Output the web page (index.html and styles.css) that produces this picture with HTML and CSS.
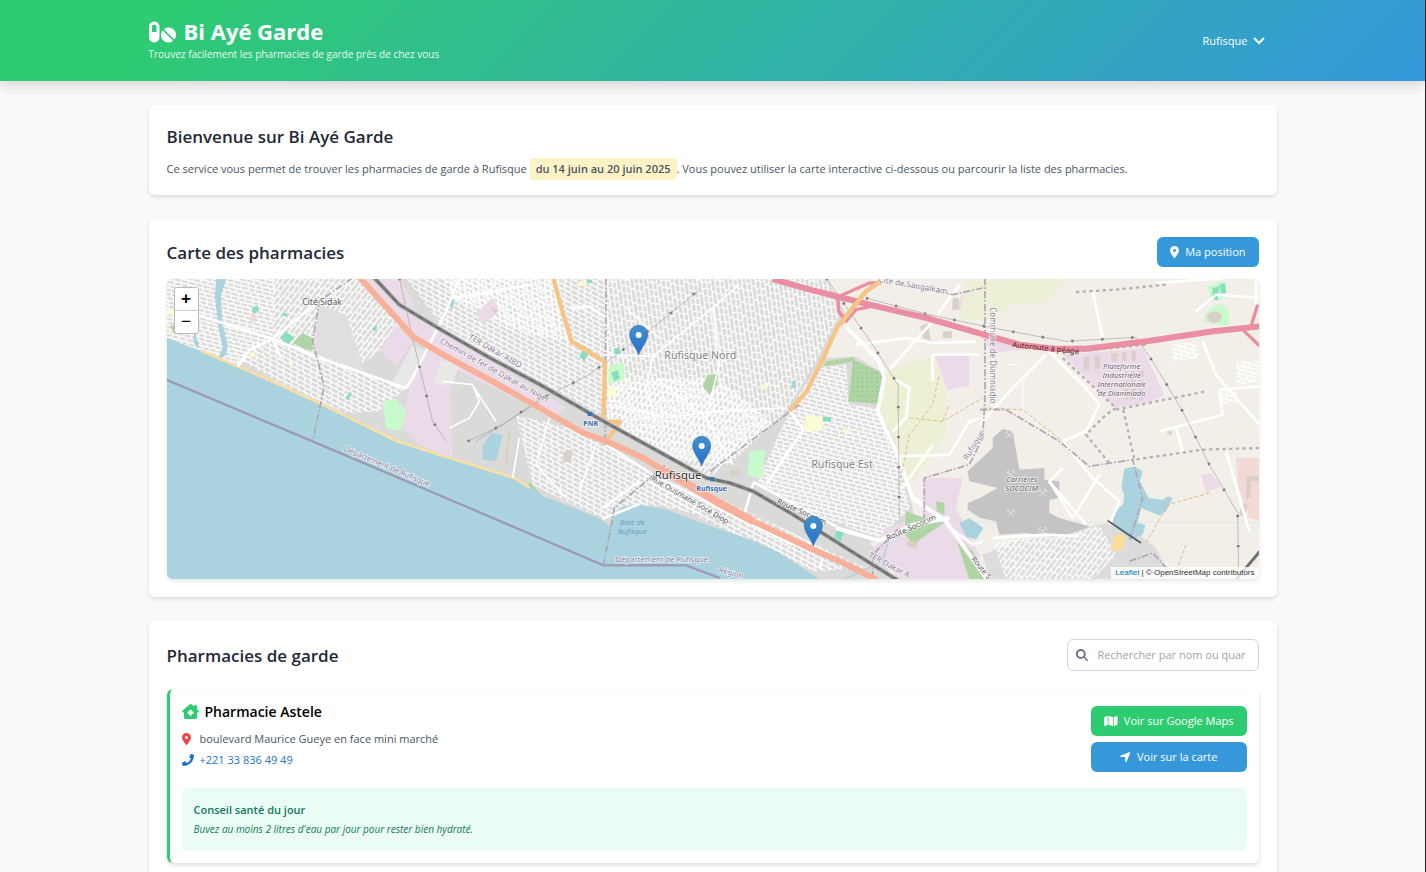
FILE: index.html
```html
<!DOCTYPE html>
<html lang="fr">
<head>
<meta charset="utf-8">
<meta name="viewport" content="width=device-width, initial-scale=1">
<title>Bi Ayé Garde</title>
<link rel="stylesheet" href="styles.css">
</head>
<body>
<header class="site-header">
  <div class="container header-row">
    <div class="brand">
      <h1 class="brand-title">
        <svg class="brand-icon" viewBox="0 0 576 512" aria-hidden="true"><path d="M112 96c-26.500 0-48 21.500-48 48V256h96V144c0-26.500-21.500-48-48-48zM0 144C0 82.100 50.100 32 112 32s112 50.100 112 112V368c0 61.900-50.100 112-112 112S0 429.900 0 368V144zM554.900 399.400c-7.100 12.300-23.700 13.100-33.800 3.100L333.500 214.900c-10-10-9.300-26.700 3.100-33.800C360 167.700 387.100 160 416 160c88.400 0 160 71.600 160 160c0 28.900-7.700 56-21.100 79.400zm-59.500 59.500C472 472.300 444.900 480 416 480c-88.400 0-160-71.600-160-160c0-28.900 7.700-56 21.100-79.400c7.100-12.300 23.700-13.100 33.800-3.100L498.500 425.100c10 10 9.300 26.700-3.100 33.800z"/></svg>
        Bi Ayé Garde
      </h1>
      <p class="brand-tagline">Trouvez facilement les pharmacies de garde près de chez vous</p>
    </div>
    <label class="city">
      <select class="city-select" aria-label="Ville"><option>Rufisque</option></select>
      <svg class="city-chevron" viewBox="0 0 12 8" aria-hidden="true"><path d="M1 1l5 5 5-5"/></svg>
    </label>
  </div>
</header>

<main class="container page">
  <section class="card card-intro">
    <h2 class="card-title">Bienvenue sur Bi Ayé Garde</h2>
    <p class="intro">Ce service vous permet de trouver les pharmacies de garde à Rufisque <strong class="period">du 14 juin au 20 juin 2025</strong>. Vous pouvez utiliser la carte interactive ci-dessous ou parcourir la liste des pharmacies.</p>
  </section>

  <section class="card">
    <div class="card-head">
      <h2 class="card-title">Carte des pharmacies</h2>
      <button class="btn btn-blue" type="button">
        <svg class="icon" viewBox="0 0 384 512" aria-hidden="true"><path d="M215.700 499.200C267 435 384 279.400 384 192C384 86 298 0 192 0S0 86 0 192c0 87.400 117 243 168.300 307.200c12.300 15.300 35.100 15.300 47.400 0zM192 128a64 64 0 1 1 0 128 64 64 0 1 1 0-128z"/></svg>
        Ma position
      </button>
    </div>
    <div class="map">
      <svg class="map-tiles" viewBox="3 3 3276 900" preserveAspectRatio="xMidYMid slice" role="img" aria-label="Carte de Rufisque">
        <defs>
          <pattern id="streets-a" width="44" height="36" patternUnits="userSpaceOnUse" patternTransform="rotate(14)"><path class="lane" d="M0 3H44M0 15H44M0 27H44M6 3V15M28 3V15M16 15V27M38 15V27M4 27V39M24 27V39"/></pattern>
          <pattern id="streets-b" width="48" height="40" patternUnits="userSpaceOnUse" patternTransform="rotate(-52)"><path class="lane" d="M0 3H48M0 17H48M0 30H48M8 3V17M34 3V17M20 17V30M2 30V43M30 30V43"/></pattern>
          <pattern id="streets-c" width="46" height="39" patternUnits="userSpaceOnUse" patternTransform="rotate(28)"><path class="lane" d="M0 3H46M0 16H46M0 29H46M10 3V16M32 3V16M20 16V29M42 16V29M5 29V42M26 29V42"/></pattern>
          <pattern id="streets-d" width="40" height="42" patternUnits="userSpaceOnUse" patternTransform="rotate(-8)"><path class="lane" d="M3 0V42M16 0V42M29 0V42M3 8H16M3 30H16M16 18H29M29 4H43M29 26H43"/></pattern>
          <pattern id="trees" width="14" height="14" patternUnits="userSpaceOnUse"><rect width="14" height="14" fill="#aed5a3"/><circle cx="4" cy="4" r="2" fill="#80b878"/></pattern>
          <linearGradient id="pin-fill" x1="0" y1="0" x2="0" y2="1"><stop offset="0" stop-color="#4191cd"/><stop offset="1" stop-color="#2571cb"/></linearGradient>
          <g id="pin">
            <path d="M0 0C-6-22-27-38-27-62A27 27 0 0 1 27-62C27-38 6-22 0 0z" fill="url(#pin-fill)" stroke="#2e6fb0" stroke-width="2"/>
            <circle cy="-60" r="9" fill="#fff"/>
          </g>
          <g id="pick" fill="none" stroke="#e9e7e5" stroke-width="3"><path d="M-9-9L10 9M9-9L-10 9M-13-3Q-13-11-4-12M4-12Q13-11 13-3"/></g>
        </defs>

        <!-- land and neighbourhoods -->
        <rect width="3300" height="910" fill="#f2efe9"/>
        <path d="M0 0H1980L2040 110L1972 240L2070 236L2150 285L2135 380L2190 500L2232 660L2250 740L2180 800L2110 790L2190 910H0z" fill="#dadad9"/>
        <path d="M0 0H330L320 180L220 265L0 180z" fill="url(#streets-a)"/>
        <path d="M320 0H560L720 60L700 150L640 220L560 280L440 240L320 180z" fill="url(#streets-b)"/>
        <path d="M460 80L540 110L600 290L440 240z" fill="#e1dfdd"/>
        <path d="M230 250L320 185L470 235L720 330L640 400L540 405L330 310z" fill="url(#streets-c)"/>
        <path d="M720 0H1330V430L840 160z" fill="url(#streets-c)"/>
        <path d="M830 0H1180L1210 190L1080 170L860 60z" fill="url(#streets-d)"/>
        <path d="M1320 0H1980L2020 110L1950 250L1860 400L1690 560L1500 540L1320 440z" fill="url(#streets-d)"/>
        <path d="M1330 300H1660L1820 440L1630 600L1500 540L1330 440z" fill="url(#streets-b)"/>
        <path d="M1950 270L2040 260L2050 380L2130 390L2190 520L2232 690L2140 780L1970 720L1770 620L1870 400z" fill="url(#streets-a)"/>
        <path d="M1050 410L1250 460L1620 690L1600 710L1460 680L1300 720L1100 620z" fill="url(#streets-c)"/>
        <path d="M1400 580L1640 650L2100 870L1940 880L1600 720z" fill="url(#streets-c)"/>

        <!-- industrial areas -->
        <path d="M590 0H700L760 110L1200 390L1160 415L840 260L760 190z" fill="#ebdbe8"/>
        <path d="M690 140L740 190L690 265L640 215zM770 215L850 240L860 540L760 500L700 440L730 330z" fill="#ebdbe8"/>
        <path d="M930 105L980 60L1000 100L950 140z" fill="#ebdbe8"/>
        <path d="M740 200L775 215L730 330L680 310zM825 245L880 260L860 320L800 320z" fill="#e8e8e8"/>
        <path d="M2305 230H2410V325L2345 335zM2365 90L2400 35L2440 50L2420 110zM2270 600L2390 600L2370 690L2440 830V905H2200L2120 820L2160 750L2270 715z" fill="#ebdbe8"/>
        <path d="M2690 230L2930 210L2995 350L2960 370L2850 390zM3105 590L3135 585L3165 625L3120 645zM2442 170L2650 205L2480 225z" fill="#ebdbe8"/>

        <!-- farmland and greens -->
        <path d="M2160 280L2300 230L2342 330L2340 470L2250 600L2220 620L2200 510L2140 400z" fill="#eef0d5"/>
        <path d="M2400 10L2700 3L2640 75L2540 80L2460 130L2380 120z" fill="#eef0d5"/>
        <path d="M2062 245L2150 285L2135 378L2046 370z" fill="url(#trees)"/>
        <path d="M1980 250L2065 237V250L1975 265zM2220 700L2290 725L2340 730L2240 800L2215 765zM2370 780L2420 820L2460 905H2410zM2310 670L2335 675V710L2312 700z" fill="#aed5a3"/>
        <path d="M380 195L410 165L440 180V220L410 210zM1610 325L1625 290H1655V320L1630 350zM1090 610L1125 650L1105 650L1085 630zM10 145L30 140V170z" fill="#aed5a3"/>
        <path d="M650 370L690 362L722 400L705 460L660 450zM1330 262L1375 255V305L1325 318zM1750 520L1798 516L1790 600L1745 595zM3110 130Q3130 75 3170 80Q3200 95 3185 145zM3125 25L3175 10L3180 60L3135 70z" fill="#c8facc"/>
        <path d="M342 180L360 160L385 180L365 200zM345 108L365 106L360 118zM258 90L275 82L278 100L262 108zM618 150L633 143L632 155L622 160zM538 360L555 340L557 350L545 367zM1240 235L1255 205L1275 215L1255 250zM1345 210H1363L1360 232H1345zM1335 285L1355 275L1362 300L1345 310zM1970 417H1995V430H1970zM2010 760L2035 755L2025 790L2005 780zM3140 30L3160 25L3155 68L3138 60zM3160 20L3178 15L3180 45L3165 48zM1265 5H1278V15H1262z" fill="#88dfbc"/>
        <path d="M0 95H25V110H0zM250 225L265 222L268 238H252zM370 252H382L378 270L370 262zM1325 327H1350V358H1322zM1920 415H1970V458H1915zM2035 455H2050V468H2036zM1785 320L1812 315L1800 335zM1240 10H1260V24H1238z" fill="#fbfbd4"/>
        <path d="M255 112L272 108L270 132L252 130zM3210 540H3282V730L3250 720L3215 620z" fill="#f2d9d8"/>

        <!-- buildings and quarry -->
        <path d="M1195 520L1220 515L1215 552H1190zM975 85L995 95L985 110zM2262 145L2285 135L2295 190L2270 180zM2330 160H2358V180H2330zM2360 60H2378V95H2358zM1693 575H1720V597H1695zM2222 790H2258L2250 812L2222 805zM3230 675L3245 680L3235 718L3218 710zM3015 460H3018V470H3004V460zM3240 595H3280V610H3255V660H3240zM3130 105A18 14 0 1 1 3160 130A18 14 0 1 1 3130 105z" fill="#d9d0c9"/>
        <path d="M2752 236H2770V276H2754zM2785 232H2803V272H2787zM2835 226H2855V250H2837zM2868 222H2882V250H2870zM2896 220H2910V248H2898z" fill="#d9d0c9"/>
        <path d="M2880 280V365M2902 280V365M2926 280V365" stroke="#d9d0c9" stroke-width="14" stroke-dasharray="18 8"/>
        <path d="M2510 453L2540 460L2560 575L2635 570V605L2680 610V660L2650 665V705L2680 720L2770 745L2730 785L2580 765L2500 770L2490 730L2442 720L2405 695V675L2442 660L2495 630L2410 610L2405 580L2480 510V480z" fill="#c5c3c3"/>
        <path d="M2550 790L2700 770L2790 740L2870 730L2970 810L3020 905H2470L2450 830z" fill="#dddcdc"/>
        <path d="M2480 790L2700 775L2800 740L2850 830L2780 905H2520z" fill="url(#streets-b)"/>
        <path d="M3020 200L3090 190L3100 240L3020 250zM3160 340H3215V375H3165zM3210 250H3280V310L3210 320z" fill="url(#streets-a)"/>

        <!-- water -->
        <path d="M0 177L40 195L90 213L170 246L250 277L330 315L400 350L480 385L540 410L600 440L690 488L820 530L940 568L1045 600L1092 625L1132 655L1172 670L1302 722L1334 747L1342 710L1367 687L1412 678L1502 695L1632 745L1735 778L1832 820L1902 865L1970 910H0z" fill="#aad3df"/>
        <path d="M2875 572Q2910 560 2930 580L2922 610L2948 660L2990 665L3005 655L3020 660L3000 700L2980 712L2925 690L2915 735L2938 740L2930 770L2895 785L2840 740Q2840 700 2870 680Q2880 650 2866 630z" fill="#aad3df"/>
        <path d="M150 0H182L165 50L168 130L185 200L180 230L158 245L170 205L158 150L147 60zM85 160L98 200L95 212L82 190zM950 505L975 465L1010 470L990 550L950 545zM852 70L866 58L862 90L854 95zM2380 735L2410 720L2452 750L2430 785L2400 775zM1876 310L1890 305L1888 330L1878 330z" fill="#aad3df"/>
        <path d="M2180 760Q2160 800 2150 850L2020 910" class="stream"/>
        <path d="M105 218L170 246L330 315L480 385L690 488L820 530L1045 600L1092 630" fill="none" stroke="#fadfa4" stroke-width="8"/>
        <path d="M2845 770L2880 770L2870 815L2835 820z" fill="#fbdc98"/>
        <path d="M472 733H3282M472 733V905M1050 733V905" class="tile-edge"/>

        <!-- local roads -->
        <g class="road">
          <path d="M60 100L320 183L460 240L720 330L740 300L840 100L880 0M320 183L440 85L560 5M320 183L345 240M320 183L250 215L215 265"/>
          <path d="M860 60L960 45L1090 20M1320 500L1460 590L1640 680L1880 800M1310 690L1420 610M1420 678L1310 722M1210 90L1270 85L1320 120"/>
          <path d="M1872 400L1912 455L1800 620M1762 615L1736 705M1762 612L2010 745M1960 870L1970 840"/>
          <path d="M2040 145L2140 250L2155 300L2135 400L2190 520L2240 660L2340 730L2460 900" stroke-width="12"/>
          <path d="M2010 750L2140 788L2240 740L2350 720" stroke-width="12"/>
          <path d="M2170 275L2300 130L2380 20M2070 200L2220 180L2300 195L2430 190M2190 305L2230 330L2220 420L2180 460M2190 535L2350 530L2410 430L2450 420M2300 310L2300 230H2440"/>
          <path d="M2210 630L2300 500M2340 740L2420 800L2450 790"/>
          <path d="M2442 440L2530 340L2640 230M2640 210L2760 330L2800 380L2760 460L2690 490L2780 600L2860 670L2830 740M2690 570L2650 610L2760 740M2480 780L2640 770L2740 775"/>
          <path d="M2650 610L2720 720L2800 590M2980 460L3170 410L3160 340M3110 190L3150 290L3280 440M2970 15L3180 0M3090 100L3150 50L3282 60M3270 0V80M3030 450L3050 520M3180 520L3250 760M3160 335L3282 325M2780 40L2810 180"/>
          <path d="M1320 230L1460 235L1440 330L1470 430M1460 235L1640 90L1720 20M1470 300L1620 420L1700 560M1340 380L1500 420L1640 400L1860 390M1640 90L1660 260L1620 420M1380 90L1480 180M1060 480L1040 600M1150 420L1110 560L1200 660M1290 500L1240 640" stroke-width="5"/>
          <path d="M830 310L920 320L940 370L910 420L850 450M925 330L990 430" stroke-width="5"/>
          <path d="M2570 300V400M2520 260H2560" stroke-width="3"/>
        </g>
        <path class="track" d="M2730 42L2850 35L3000 20M2690 240L2850 390L2820 410L2760 470L2830 555M2850 395L3120 340M2872 395L2905 545L3110 515L3282 510M2690 225L2940 200"/>
        <path class="footpath" d="M2200 620L2230 470L2300 380L2320 290M2230 420L2330 430L2450 360M2330 430L2350 380M2450 390L2570 395L2690 490M2940 795L3005 680L3130 645M3060 800L3030 880M1020 560L1030 460"/>

        <!-- boundaries -->
        <path class="border" d="M0 305L440 490L840 660L1312 862H1560L1662 900"/>
        <path class="border-dash" d="M560 0L460 70L440 190L475 325L440 490M1312 862L1335 745L1345 690L1500 560M1320 0L1318 500M1632 580L1900 380M2457 0V360L2450 480L2410 560L2275 600V720M2442 395H2520L2680 490L2770 565L2900 545L2930 660L2890 790M2890 850L2960 825L3020 890M2120 900V830L2200 750M2200 20L2360 50L2450 30" />

        <!-- power lines -->
        <path class="power" d="M700 0L742 190L800 430L840 490M905 490L1010 440L1120 365L1260 295L1325 250L1460 150L1600 35M930 490L1120 370M1980 0L2120 200L2196 320L2200 720M2100 60L2280 108L2480 150L2700 190L2910 178L2960 250L3050 400L3130 560L3215 705L3218 890"/>
        <path class="power-poles" d="M700 0L742 190L800 430L840 490M905 490L1010 440L1120 365L1260 295L1325 250L1460 150L1600 35M1980 0L2120 200L2196 320L2200 720M2100 60L2280 108L2480 150L2700 190L2910 178L2960 250L3050 400L3130 560L3215 705L3218 890"/>

        <!-- main roads and railway -->
        <path class="secondary" d="M1162 0L1192 110L1217 190L1317 252L1312 430L1362 432L1322 490M2145 8L2100 40L2060 90L2015 145L1972 240L1922 340L1872 397"/>
        <path class="trunk" d="M582 0L650 75L740 175L840 235L952 295L1122 390L1252 465L1322 490L1432 540L1662 680L1762 730L1932 810L2032 855L2132 905"/>
        <path class="trunk trunk-wide" d="M1500 580L1662 676L1762 730"/>
        <path class="rail-base" d="M625 0L700 80L830 158L972 240L1122 320L1322 435L1522 545L1622 600L1692 615L1762 640L1882 710L2032 805L2200 910"/>
        <path class="rail" d="M625 0L700 80L830 158L972 240L1122 320L1322 435L1522 545L1622 600L1692 615L1762 640L1882 710L2032 805L2200 910M3282 820L3210 905"/>
        <path class="rail-gap" d="M625 0L700 80L830 158L972 240L1122 320L1322 435L1522 545L1622 600L1692 615L1762 640L1882 710L2032 805L2200 910"/>
        <path d="M2825 728L2925 795" stroke="#555" stroke-width="5"/>
        <path class="motorway" d="M1820 3L1932 35L2032 60L2132 85L2282 120L2472 175L2562 200L2662 212H2762L2942 190L3142 160L3282 145"/>
        <path class="motorway-link" d="M2020 55L2110 15L2145 15M2016 60L2018 100L2040 130L2070 95L2140 80M3230 155L3282 205M3255 145L3275 80"/>
        <path class="secondary" d="M2145 8L2100 40L2060 90L2022 140"/>
        <path d="M1265 402h14v12h-14zM1633 598h12v12h-12z" fill="#3775b5"/>

        <!-- quarry picks -->
        <use href="#pick" x="2530" y="472"/><use href="#pick" x="2534" y="590"/><use href="#pick" x="2630" y="645"/><use href="#pick" x="2534" y="706"/><use href="#pick" x="2630" y="760"/>

        <!-- labels -->
        <g class="labels">
          <text x="468" y="82" font-size="26">Cité Sidak</text>
          <text x="1603" y="242" font-size="32" class="district">Rufisque Nord</text>
          <text x="2028" y="569" font-size="32" class="district">Rufisque Est</text>
          <text x="1536" y="604" font-size="34" class="town">Rufisque</text>
          <text x="1274" y="444" font-size="21" class="station">PNR</text>
          <text x="1637" y="640" font-size="21" class="station">Rufisque</text>
          <text font-size="23" class="area" transform="translate(660 572) rotate(23)">Département de Rufisque</text>
          <text x="1487" y="852" font-size="23" class="area">Département de Rufisque</text>
          <text font-size="23" class="area" transform="translate(1693 892) rotate(14)">Région</text>
          <text font-size="24" class="area" transform="translate(2472 232) rotate(90)">Commune de Diamniadio</text>
          <text font-size="24" class="area" transform="translate(2430 506) rotate(-58)">Rufisque</text>
          <text font-size="24" class="area" transform="translate(2240 30) rotate(10)">Cité de Sangalkam</text>
          <text font-size="24" class="area" transform="translate(984 226) rotate(30)">TER Dakar-AIBD</text>
          <text font-size="24" class="area" transform="translate(982 284) rotate(29)">Chemin de fer de Dakar au Niger</text>
          <text font-size="24" class="area" transform="translate(2166 868) rotate(28)">TER Dakar A</text>
          <text font-size="23" transform="translate(1568 672) rotate(30)">Rue Ousmane Socé Diop</text>
          <text font-size="23" transform="translate(1904 708) rotate(24)">Route Sococim</text>
          <text font-size="23" transform="translate(2238 756) rotate(-24)">Route Sococim</text>
          <text font-size="22" transform="translate(2440 874) rotate(51)">Route S</text>
          <text font-size="23" class="toll" transform="translate(2638 218) rotate(6)">Autoroute à péage</text>
          <text font-size="23" class="sea" x="1399" y="740">Baie de</text>
          <text font-size="23" class="sea" x="1399" y="767">Rufisque</text>
          <g class="place" font-size="23">
            <text x="2867" y="273">Plateforme</text><text x="2867" y="300">Industrielle</text><text x="2867" y="327">Internationale</text><text x="2867" y="354">de Diamniado</text>
            <text x="2567" y="612">Carrières</text><text x="2567" y="638">SOCOCIM</text>
          </g>
        </g>

        <use href="#pin" x="1418" y="231"/>
        <use href="#pin" x="1607" y="564"/>
        <use href="#pin" x="1942" y="804"/>
      </svg>
      <div class="map-zoom">
        <button class="zoom-btn" type="button" aria-label="Zoomer">+</button>
        <button class="zoom-btn" type="button" aria-label="Dézoomer">−</button>
      </div>
      <div class="map-credit"><a href="#leaflet">Leaflet</a> | © OpenStreetMap contributors</div>
    </div>
  </section>

  <section class="card">
    <div class="card-head list-head">
      <h2 class="card-title">Pharmacies de garde</h2>
      <label class="search">
        <svg class="search-icon" viewBox="0 0 512 512" aria-hidden="true"><path d="M416 208c0 45.900-14.900 88.300-40 122.700L502.600 457.400c12.500 12.500 12.500 32.800 0 45.300s-32.800 12.500-45.300 0L330.700 376c-34.400 25.200-76.800 40-122.700 40C93.100 416 0 322.900 0 208S93.100 0 208 0S416 93.100 416 208zM208 336a128 128 0 1 0 0-256 128 128 0 1 0 0 256z"/></svg>
        <input class="search-input" type="text" placeholder="Rechercher par nom ou quartier..." aria-label="Rechercher par nom ou quartier">
      </label>
    </div>

    <article class="pharmacy">
      <div class="pharmacy-row">
        <div class="pharmacy-info">
          <h3 class="pharmacy-name">
            <svg class="icon-house" viewBox="0 0 576 512" aria-hidden="true"><path fill-rule="evenodd" d="M309 8c-12-11-30-11-42 0L11 232c-22 20-9 56 21 56h32v160c0 35 29 64 64 64h320c35 0 64-29 64-64V288h32c30 0 43-36 21-56l-53-46V64c0-18-14-32-32-32h-32c-18 0-32 14-32 32v10zM248 208c0-9 7-16 16-16h48c9 0 16 7 16 16v48h48c9 0 16 7 16 16v48c0 9-7 16-16 16h-48v48c0 9-7 16-16 16h-48c-9 0-16-7-16-16v-48h-48c-9 0-16-7-16-16v-48c0-9 7-16 16-16h48z"/></svg>
            Pharmacie Astele
          </h3>
          <p class="pharmacy-line">
            <svg class="icon icon-red" viewBox="0 0 384 512" aria-hidden="true"><path d="M215.700 499.200C267 435 384 279.400 384 192C384 86 298 0 192 0S0 86 0 192c0 87.400 117 243 168.300 307.200c12.300 15.300 35.100 15.300 47.400 0zM192 128a64 64 0 1 1 0 128 64 64 0 1 1 0-128z"/></svg>
            boulevard Maurice Gueye en face mini marché
          </p>
          <p class="pharmacy-line">
            <svg class="icon icon-phone" viewBox="0 0 512 512" aria-hidden="true"><path d="M493.400 24.600l-104-24c-11.300-2.600-22.900 3.300-27.500 13.900l-48 112c-4.200 9.800-1.400 21.300 6.900 28l60.600 49.600c-36 76.700-98.900 140.500-177.200 177.200l-49.600-60.600c-6.800-8.300-18.200-11.100-28-6.900l-112 48C3.900 366.500-2 378.100.6 389.400l24 104C27.100 504.200 36.700 512 48 512c256.100 0 464-207.500 464-464 0-11.200-7.700-20.900-18.600-23.400z"/></svg>
            <a class="phone-link" href="tel:+221338364949">+221 33 836 49 49</a>
          </p>
        </div>
        <div class="pharmacy-actions">
          <a class="btn btn-green" href="#google-maps">
            <svg class="icon" viewBox="0 0 576 512" aria-hidden="true"><path d="M384 476.100L192 421.200V35.900L384 90.800V476.100zm32-1.200V88.400L543.100 37.500c15.800-6.300 32.900 5.300 32.900 22.300V394.600c0 9.800-6 18.600-15.100 22.300L416 474.800zM15.100 95.100L160 37.200V423.600L32.900 474.500C17.100 480.800 0 469.200 0 452.200V117.400c0-9.800 6-18.600 15.100-22.300z"/></svg>
            Voir sur Google Maps
          </a>
          <button class="btn btn-blue" type="button">
            <svg class="icon" viewBox="0 0 448 512" aria-hidden="true"><path d="M429.600 92.100c4.900-11.900 2.100-25.600-7-34.700s-22.800-11.900-34.700-7l-352 144c-14.200 5.800-22.200 20.800-19.300 35.800s16.100 25.800 31.400 25.800H224V432c0 15.300 10.800 28.400 25.800 31.400s30-5.100 35.800-19.300l144-352z"/></svg>
            Voir sur la carte
          </button>
        </div>
      </div>
      <div class="advice">
        <h4 class="advice-title">Conseil santé du jour</h4>
        <p class="advice-text">Buvez au moins 2 litres d'eau par jour pour rester bien hydraté.</p>
      </div>
    </article>
  </section>
</main>
</body>
</html>
```
FILE: styles.css
```css
*, *::before, *::after { box-sizing: border-box; }
html { background: #f9f9f9; overflow: hidden; }
body {
  margin: 0;
  height: 100vh;
  overflow: hidden;
  border-right: 1px solid #22262b;
  background: #f9f9f9;
  color: #1f2937;
  font-family: "Open Sans", "Noto Sans", sans-serif;
  font-size: 11px;
  line-height: 18px;
}
h1, h2, h3, h4, p { margin: 0; }
a { text-decoration: none; }
button, select, input { font: inherit; }
svg { display: block; flex: none; }

.container { width: 100%; max-width: 1152px; margin: 0 auto; padding: 0 12px; }

.site-header {
  background: linear-gradient(135deg, #2ecc71 10%, #3498db);
  color: #fff;
  padding: 18px 0;
  box-shadow: 0 4px 12px rgba(0, 0, 0, .15);
}
.header-row { display: flex; align-items: center; justify-content: space-between; }
.brand-title { display: flex; align-items: center; gap: 8px; font-size: 22px; line-height: 27px; font-weight: 700; }
.brand-icon { width: 27px; height: 24px; fill: #fff; }
.brand-tagline { font-size: 10px; line-height: 18px; opacity: .9; }

.city { display: flex; align-items: center; gap: 5px; padding: 6px 12px; }
.city-select { appearance: none; border: 0; background: transparent; color: #fff; padding: 0; cursor: pointer; }
.city-select option { color: #1f2937; }
.city-chevron { width: 12px; height: 8px; fill: none; stroke: #fff; stroke-width: 2; }

.page { display: flex; flex-direction: column; gap: 24px; padding-top: 24px; }
.card { background: #fff; border-radius: 6px; padding: 18px; box-shadow: 0 2px 4px rgba(0, 0, 0, .12); }
.card-intro { padding-bottom: 15px; }
.card-title { font-size: 17px; line-height: 27px; font-weight: 600; }
.intro { margin-top: 8px; line-height: 22px; color: #4b5563; }
.period { display: inline-block; padding: 0 6px; border-radius: 3px; background: #fef3c7; font-weight: 600; }

.card-head { display: flex; align-items: center; justify-content: space-between; margin-bottom: 12px; }
.list-head { margin-bottom: 18px; }

.btn {
  display: flex; align-items: center; justify-content: center; gap: 6px;
  height: 30px; padding: 0 13px; border: 0; border-radius: 6px;
  color: #fff; cursor: pointer; white-space: nowrap;
}
.btn-blue { background: #3498db; }
.btn-green { background: #2ecc71; }
.icon { height: 12px; fill: currentColor; }

.map { position: relative; height: 300px; border-radius: 6px; overflow: hidden; box-shadow: 0 2px 4px rgba(0, 0, 0, .1); }
.map-tiles { width: 100%; height: 100%; font-family: "Noto Sans", "Open Sans", sans-serif; }
.map-zoom {
  position: absolute; top: 8px; left: 7px;
  display: flex; flex-direction: column;
  border: 1px solid #bbb; border-radius: 3px; overflow: hidden;
}
.zoom-btn {
  width: 23px; height: 22px; padding: 0; border: 0;
  background: #fff; color: #000;
  font: 700 17px/22px "Liberation Sans", sans-serif; cursor: pointer;
}
.zoom-btn + .zoom-btn { height: 23px; border-top: 1px solid #ccc; font-weight: 400; }
.map-credit {
  position: absolute; right: 0; bottom: 0; padding: 0 4px;
  background: rgba(255, 255, 255, .8); color: #333;
  font: 8px/12px "Liberation Sans", Arial, sans-serif;
}
.map-credit a { color: #0078a8; }

.lane { fill: none; stroke: #fff; stroke-width: 4; }
.road { fill: none; stroke: #fff; stroke-width: 8; stroke-linejoin: round; }
.stream { fill: none; stroke: #aad3df; stroke-width: 4; }
.tile-edge { fill: none; stroke: #c4dbe0; stroke-width: 2; opacity: .5; }
.track { fill: none; stroke: #b3b1b1; stroke-width: 7; stroke-dasharray: 10 10; }
.footpath { fill: none; stroke: #d8bf90; stroke-width: 3; stroke-dasharray: 12 6; }
.border { fill: none; stroke: #9a8fae; stroke-width: 7; opacity: .85; }
.border-dash { fill: none; stroke: #b0a4b8; stroke-width: 5; stroke-dasharray: 22 6 5 6; }
.power { fill: none; stroke: #a5a3a3; stroke-width: 2; }
.power-poles { fill: none; stroke: #7d7b7b; stroke-width: 8; stroke-dasharray: 7 83; }
.secondary { fill: none; stroke: #f7c485; stroke-width: 13; stroke-linejoin: round; }
.trunk { fill: none; stroke: #f8b09b; stroke-width: 18; stroke-linejoin: round; }
.trunk-wide { stroke-width: 24; }
.motorway { fill: none; stroke: #e98fa1; stroke-width: 18; stroke-linejoin: round; }
.motorway-link { fill: none; stroke: #e98fa1; stroke-width: 10; stroke-linejoin: round; }
.rail-base { fill: none; stroke: #c9c7c7; stroke-width: 15; }
.rail { fill: none; stroke: #6f7170; stroke-width: 9; }
.rail-gap { fill: none; stroke: #8e908f; stroke-width: 3; stroke-dasharray: 16 16; }

.labels text { fill: #555; text-anchor: middle; paint-order: stroke; stroke: rgba(255, 255, 255, .7); stroke-width: 5; }
.labels .district { fill: #858585; }
.labels .town { fill: #333; }
.labels .toll { fill: #5c1c22; stroke: none; }
.labels .area { fill: #8d7f96; }
.labels .station { fill: #3a6cb0; font-weight: 700; }
.labels .sea { fill: #6f9fc4; font-style: italic; stroke: none; }
.labels .place text { fill: #6b6272; font-style: italic; }

.search {
  display: flex; align-items: center; gap: 10px;
  width: 192px; height: 32px; padding: 0 12px 0 8px;
  border: 1px solid #d1d5db; border-radius: 6px; background: #fff;
}
.search-icon { width: 12px; height: 12px; fill: #6b7280; }
.search-input { flex: 1; min-width: 0; padding: 0; border: 0; outline: 0; background: transparent; color: #1f2937; }
.search-input::placeholder { color: #9ca3af; opacity: 1; }

.pharmacy {
  border-left: 3px solid #2ecc71; border-radius: 6px; padding: 12px;
  background: #fff; box-shadow: 0 2px 4px rgba(0, 0, 0, .14);
}
.pharmacy-row { display: flex; align-items: flex-start; justify-content: space-between; }
.pharmacy-name { display: flex; align-items: center; gap: 6px; color: #000; font-size: 14px; line-height: 21px; font-weight: 600; margin-bottom: 6px; }
.icon-house { width: 17px; height: 15px; fill: #2ecc71; }
.pharmacy-line { display: flex; align-items: center; color: #4b5563; line-height: 21px; }
.pharmacy-line .icon { margin-right: 9px; }
.icon-red { width: 9px; color: #ef4444; }
.pharmacy-line .icon-phone { width: 12px; margin-right: 6px; color: #1d72cf; }
.phone-link { color: #1d72cf; }
.pharmacy-actions { display: flex; flex-direction: column; gap: 6px; padding-top: 5px; }

.advice { margin-top: 16px; padding: 12px; border-radius: 6px; background: #ebfcf5; color: #0f7a5f; }
.advice-title { font-size: 11px; line-height: 20px; font-weight: 600; }
.advice-text { font-size: 10px; line-height: 19px; font-style: italic; }
```
